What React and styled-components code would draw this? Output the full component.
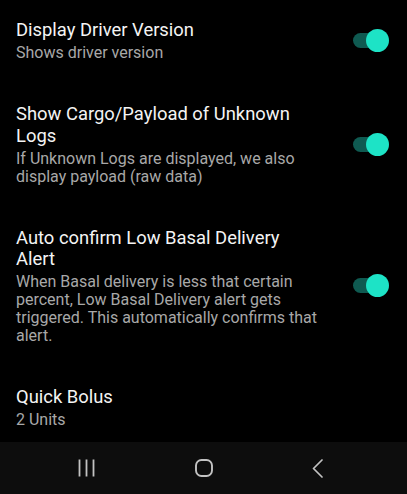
import * as React from 'react';
import styled, { createGlobalStyle } from 'styled-components';

const GlobalStyle = createGlobalStyle`
  html, body {
    margin: 0;
    padding: 0;
    background: #000;
  }
  body {
    font-family: Roboto, "Noto Sans", "Liberation Sans", sans-serif;
    -webkit-font-smoothing: antialiased;
  }
`;

const Screen = styled.div`
  width: 407px;
  height: 494px;
  display: flex;
  flex-direction: column;
  background: #000;
  overflow: hidden;
`;

const List = styled.div`
  flex: 1;
  min-height: 0;
  overflow: hidden;
  display: flex;
  flex-direction: column;
`;

const Row = styled.div`
  display: flex;
  align-items: center;
  flex-shrink: 0;
  padding: 19px 20px 22px 16px;
`;

const Texts = styled.div`
  flex: 1;
  min-width: 0;
  max-width: 303px;
`;

const Title = styled.div`
  color: #f4f4f4;
  font-size: 18.4px;
  line-height: 21.5px;
`;

const Summary = styled.div`
  color: #a8a8a8;
  font-size: 16px;
  line-height: 18px;
  margin-top: 3.5px;
`;

const Track = styled.div`
  position: relative;
  margin-left: auto;
  width: 34px;
  height: 15px;
  border-radius: 8px;
  background: #0f5a51;
  flex-shrink: 0;
`;

const Thumb = styled.div`
  position: absolute;
  top: -4px;
  right: -2px;
  width: 23px;
  height: 23px;
  border-radius: 50%;
  background: #1de3c6;
`;

const NavBar = styled.div`
  height: 52px;
  flex-shrink: 0;
  background: #0d0d0d;
  display: flex;
  align-items: center;
  justify-content: space-between;
  padding: 0 84px 0 78px;
`;

const NavIcon = styled.svg`
  display: block;
  color: #c2c2c2;
`;

const Switch = () => (
  <Track>
    <Thumb />
  </Track>
);

const prefs = [
  {
    title: 'Display Driver Version',
    summary: 'Shows driver version',
    toggle: true
  },
  {
    title: 'Show Cargo/Payload of Unknown Logs',
    summary: 'If Unknown Logs are displayed, we also display payload (raw data)',
    toggle: true
  },
  {
    title: 'Auto confirm Low Basal Delivery Alert',
    summary:
      'When Basal delivery is less that certain percent, Low Basal Delivery alert gets triggered. This automatically confirms that alert.',
    toggle: true
  },
  {
    title: 'Quick Bolus',
    summary: '2 Units',
    toggle: false
  }
];

const App = () => (
  <Screen>
    <GlobalStyle />
    <List>
      {prefs.map((pref) => (
        <Row key={pref.title}>
          <Texts>
            <Title>{pref.title}</Title>
            <Summary>{pref.summary}</Summary>
          </Texts>
          {pref.toggle && <Switch />}
        </Row>
      ))}
    </List>
    <NavBar>
      <NavIcon width="17" height="18" viewBox="0 0 17 18">
        <g stroke="currentColor" strokeWidth="1.8">
          <line x1="1.5" y1="0.5" x2="1.5" y2="17.5" />
          <line x1="8.5" y1="0.5" x2="8.5" y2="17.5" />
          <line x1="15.5" y1="0.5" x2="15.5" y2="17.5" />
        </g>
      </NavIcon>
      <NavIcon width="18" height="18" viewBox="0 0 18 18">
        <rect
          x="1"
          y="1"
          width="16"
          height="16"
          rx="5.5"
          fill="none"
          stroke="currentColor"
          strokeWidth="1.9"
        />
      </NavIcon>
      <NavIcon width="11" height="19" viewBox="0 0 11 19">
        <polyline
          points="10,1 1.5,9.5 10,18"
          fill="none"
          stroke="currentColor"
          strokeWidth="1.7"
          strokeLinecap="round"
          strokeLinejoin="round"
        />
      </NavIcon>
    </NavBar>
  </Screen>
);

export default App;
